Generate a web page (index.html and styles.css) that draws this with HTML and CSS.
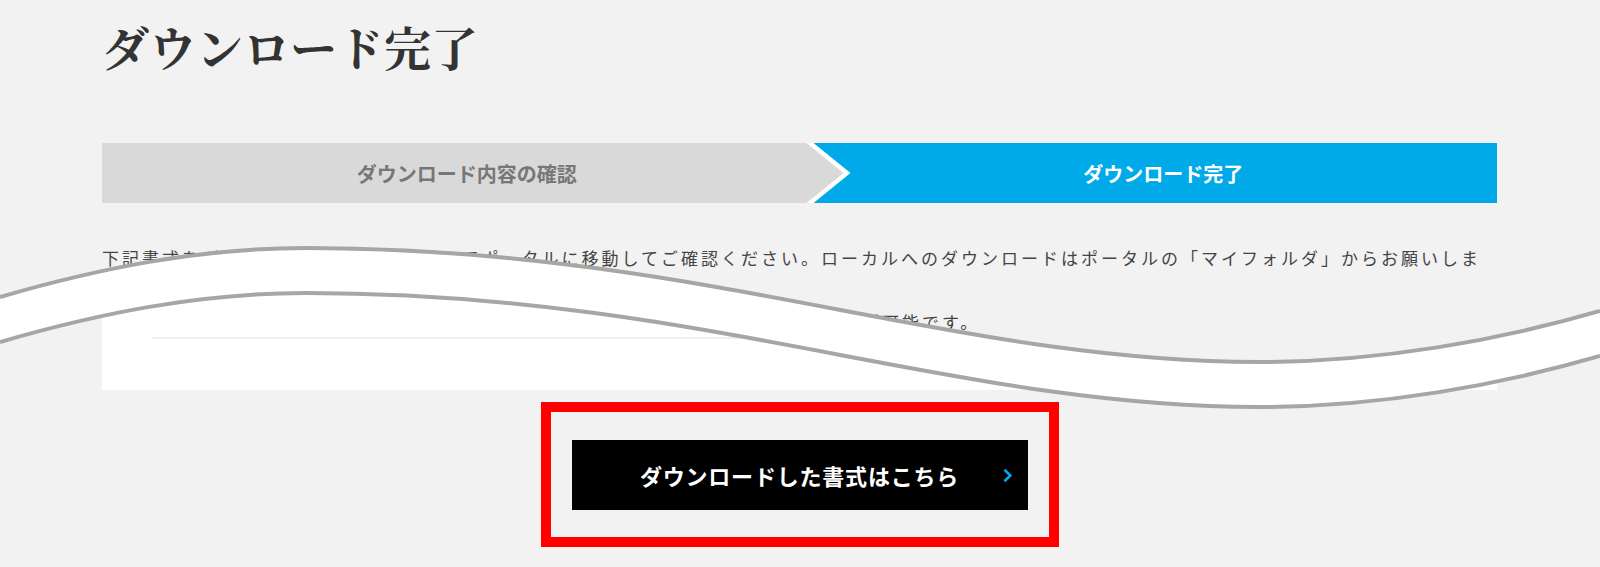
FILE: index.html
```html
<!DOCTYPE html>
<html lang="ja">
<head>
  <meta charset="UTF-8">
  <title>ダウンロード完了</title>
  <link rel="stylesheet" href="styles.css">
</head>
<body>
  <div class="page">

    <div class="shot shot-upper">
      <h1>ダウンロード完了</h1>

      <ol class="steps">
        <li class="step step-done">ダウンロード内容の確認</li>
        <li class="step step-current">ダウンロード完了</li>
      </ol>

      <p class="lead">下記書式をダウンロードしました。続いてポータルに移動してご確認ください。ローカルへのダウンロードはポータルの「マイフォルダ」からお願いします。<br>マイフォルダに保存された書式は、ポータル上でいつでも閲覧・編集・印刷することが可能です。</p>
    </div>

    <div class="shot shot-lower">
      <div class="card">
        <div class="card-row"></div>
      </div>

      <div class="action">
        <div class="highlight">
          <a class="btn" href="#">
            ダウンロードした書式はこちら
            <svg class="btn-arrow" width="11" height="15" viewBox="0 0 11 15">
              <path d="M2.5 1.8 L8.3 7.5 L2.5 13.2" fill="none" stroke="#00a9e8" stroke-width="2.6"/>
            </svg>
          </a>
        </div>
      </div>
    </div>

    <!-- 省略を示す波線 -->
    <svg class="cut" width="1600" height="567" viewBox="0 0 1600 567">
      <path fill="#fff" d="M0,297 C100,268 200,248 306,248 C700,248 950,362 1259,362 C1380,362 1500,340 1600,311 L1600,356 C1500,385 1380,407 1259,407 C950,407 700,293 306,293 C200,293 100,313 0,342 Z"/>
      <path fill="none" stroke="#a6a6a6" stroke-width="4" d="M0,297 C100,268 200,248 306,248 C700,248 950,362 1259,362 C1380,362 1500,340 1600,311"/>
      <path fill="none" stroke="#a6a6a6" stroke-width="4" d="M0,342 C100,313 200,293 306,293 C700,293 950,407 1259,407 C1380,407 1500,385 1600,356"/>
    </svg>

  </div>
</body>
</html>
```

FILE: styles.css
```css
body {
  margin: 0;
  background-color: #f2f2f2;
  font-family: "Noto Sans CJK JP", "Noto Sans", sans-serif;
  color: #333;
}
.page {
  position: relative;
  width: 1600px;
  height: 567px;
  overflow: hidden;
}
.shot {
  padding: 0 103px 0 102px;
}
.shot-upper {
  padding-top: 14px;
}
h1 {
  margin: 0;
  font-family: "Noto Serif CJK JP", "Noto Sans CJK JP", serif;
  font-size: 47px;
  line-height: 64px;
  font-weight: 700;
  color: #333;
}
.steps {
  display: flex;
  height: 60px;
  margin: 65px 0 0;
  padding: 0;
  list-style: none;
  background-color: #fff;
}
.step {
  display: flex;
  align-items: center;
  justify-content: center;
  box-sizing: border-box;
  font-size: 20px;
  font-weight: 700;
}
.step-done {
  width: calc(50% + 44px);
  padding-right: 12px;
  background-color: #d9d9d9;
  color: #777;
  clip-path: polygon(0 0, calc(100% - 37px) 0, 100% 50%, calc(100% - 37px) 100%, 0 100%);
}
.step-current {
  flex: 1;
  margin-left: -30px;
  padding-left: 16px;
  background-color: #00a9e8;
  color: #fff;
  clip-path: polygon(0 0, 100% 0, 100% 100%, 0 100%, 37px 50%);
}
.lead {
  margin: 39px 0 0;
  font-size: 17px;
  line-height: 32px;
  letter-spacing: 3px;
  color: #444;
}
.shot-lower {
  margin-top: -58px;
  padding-top: 8px;
  height: 279px;
  background-color: #f2f2f2;
  clip-path: path("M0,52 C100,23 200,3 306,3 C700,3 950,117 1259,117 C1380,117 1500,95 1600,66 L1600,300 L0,300 Z");
}
.card {
  padding: 0 50px 51px;
  background-color: #fff;
}
.card-row {
  height: 49px;
  border-bottom: 2px solid #efefef;
}
.action {
  display: flex;
  justify-content: center;
  margin-top: 12px;
}
.highlight {
  padding: 28px 21px 27px;
  border: 10px solid #ff0000;
}
.btn {
  position: relative;
  display: flex;
  align-items: center;
  justify-content: center;
  width: 456px;
  height: 70px;
  background-color: #000;
  color: #fff;
  font-size: 22px;
  font-weight: 700;
  letter-spacing: 0.8px;
  text-decoration: none;
}
.btn-arrow {
  position: absolute;
  right: 15px;
  top: 28px;
}
.cut {
  position: absolute;
  top: 0;
  left: 0;
  pointer-events: none;
}
```
